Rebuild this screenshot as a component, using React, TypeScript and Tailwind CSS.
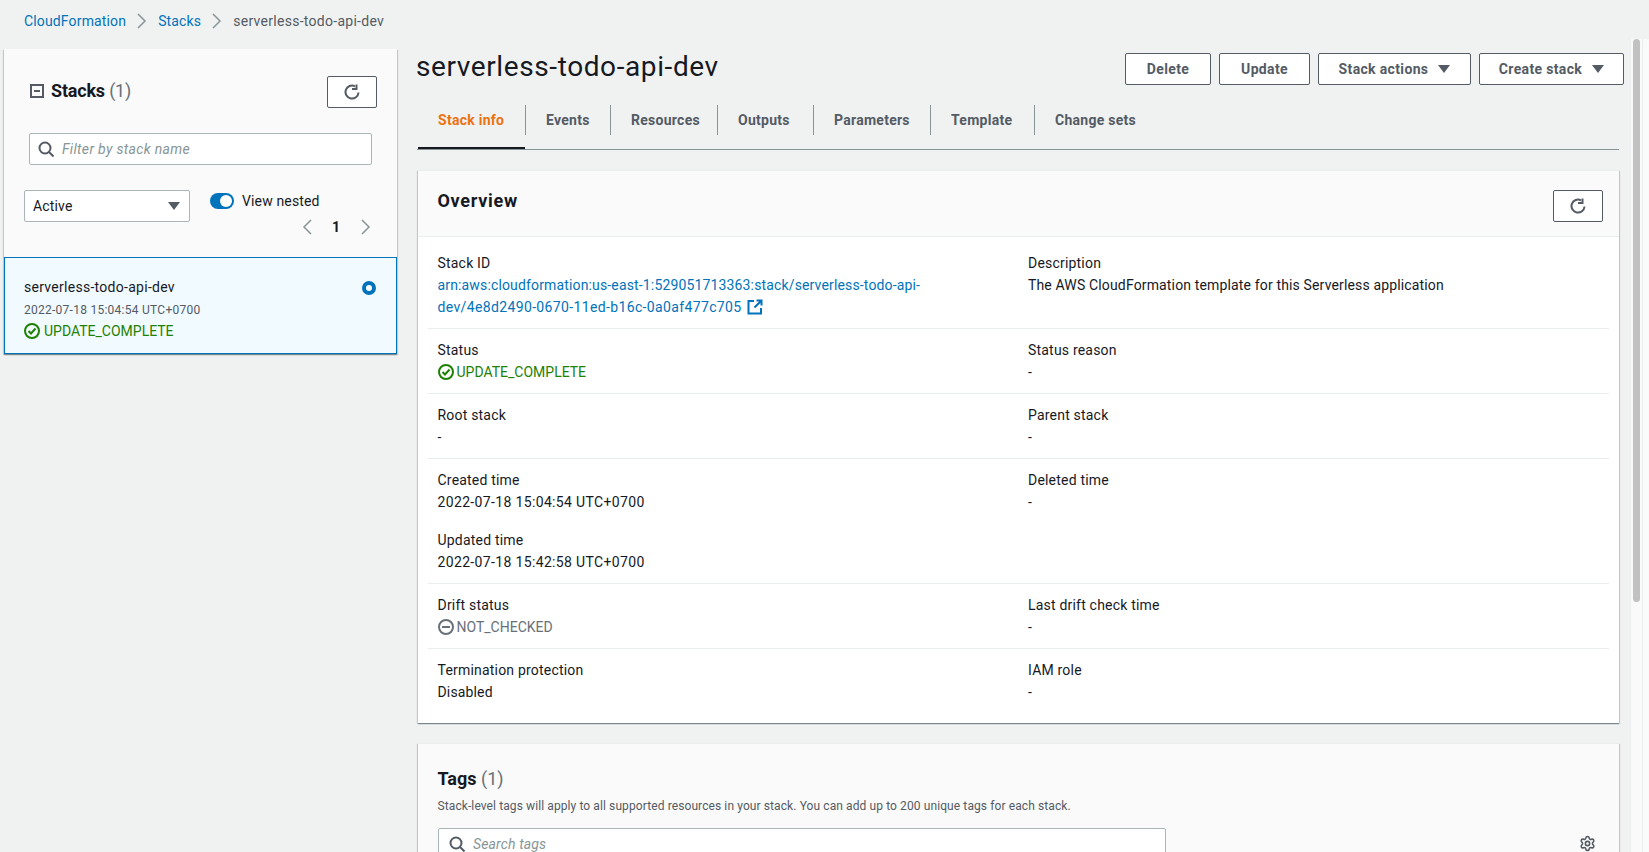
import type { ReactNode } from 'react';
import { Settings } from 'lucide-react';

function Refresh() {
  return (
    <svg viewBox="0 0 16 16" className="h-[16px] w-[16px]" fill="none" stroke="#545b64" strokeWidth="2">
      <path d="M14.500 8.500A6.500 6.500 0 1 1 11 2.300" />
      <path d="M12.500 0.500V5H8" />
    </svg>
  );
}

function RefreshButton() {
  return (
    <button className="flex h-[32px] w-[50px] items-center justify-center rounded-[2px] border border-[#545b64] bg-white">
      <Refresh />
    </button>
  );
}

function Search() {
  return (
    <svg viewBox="0 0 16 16" className="h-[16px] w-[16px] shrink-0" fill="none" stroke="#545b64" strokeWidth="2">
      <circle cx="7" cy="7" r="5.500" />
      <path d="M11 11l4.500 4.500" />
    </svg>
  );
}

function Caret() {
  return (
    <svg viewBox="0 0 12 8" className="h-[8px] w-[12px] shrink-0" fill="#545b64">
      <path d="M0 0h12L6 8z" />
    </svg>
  );
}

function CheckCircle() {
  return (
    <svg viewBox="0 0 16 16" className="h-[16px] w-[16px] shrink-0" fill="none" stroke="#1d8102" strokeWidth="2">
      <circle cx="8" cy="8" r="7" />
      <path d="M4.500 8l2.500 2.500 4.500-5" />
    </svg>
  );
}

function MinusCircle() {
  return (
    <svg viewBox="0 0 16 16" className="h-[16px] w-[16px] shrink-0" fill="none" stroke="#687078" strokeWidth="2">
      <circle cx="8" cy="8" r="7" />
      <path d="M4 8h8" />
    </svg>
  );
}

function Chevron({ left = false }: { left?: boolean }) {
  return (
    <svg viewBox="0 0 10 16" className="h-[16px] w-[10px] shrink-0" fill="none" stroke="#879596" strokeWidth="1.500">
      <path d={left ? 'M9 1L2 8l7 7' : 'M1 1l7 7-7 7'} />
    </svg>
  );
}

function Field({ label, children }: { label: string; children: ReactNode }) {
  return (
    <div>
      <div className="h-[22px] leading-[22px] tracking-[0.2px] text-[#16191f]">{label}</div>
      <div className="leading-[22px] text-[#16191f]">{children}</div>
    </div>
  );
}

function Row({ first, last, children }: { first?: boolean; last?: boolean; children: ReactNode }) {
  return (
    <div
      className={`mx-[10px] grid grid-cols-[590.5px_1fr] pl-[9.5px] pr-[10px] ${first ? 'pt-[15px]' : 'pt-[10px]'} ${
        last ? 'pb-[20px]' : 'border-b border-[#eaeded] pb-[10px]'
      }`}
    >
      {children}
    </div>
  );
}

const tabs = [
  { label: 'Events', width: 'w-[85px]' },
  { label: 'Resources', width: 'w-[107px]' },
  { label: 'Outputs', width: 'w-[96px]' },
  { label: 'Parameters', width: 'w-[117px]' },
  { label: 'Template', width: 'w-[104px]' },
  { label: 'Change sets', width: 'w-[125px]' },
];
const cardShadow = 'shadow-[0_1px_1px_0_rgba(0,28,36,0.3),1px_1px_1px_0_rgba(0,28,36,0.15),-1px_1px_1px_0_rgba(0,28,36,0.15)]';

export default function App() {
  return (
    <div className="flex h-[852px] overflow-hidden bg-[#f0f2f2] text-[14px] tracking-[0.15px] text-[#16191f] [font-family:Roboto,sans-serif]">
      <div className="min-w-0 flex-1">
        <nav className="flex h-[42px] items-center pl-[24px]">
          <a className="text-[#0073bb]">CloudFormation</a>
          <span className="mx-[11px]"><Chevron /></span>
          <a className="text-[#0073bb]">Stacks</a>
          <span className="mx-[11px]"><Chevron /></span>
          <span className="tracking-[0.28px] text-[#545b64]">serverless-todo-api-dev</span>
        </nav>

        <div className="flex pl-[4px]">
          <aside className="mt-[7px] w-[393px] shrink-0">
            <div className={`bg-[#fafafa] ${cardShadow}`}>
              <div className="flex items-start justify-between pl-[26px] pr-[20px] pt-[27px]">
                <div className="mt-[3px] flex items-center gap-[7px]">
                  <svg viewBox="0 0 14 14" className="h-[14px] w-[14px]" fill="none" stroke="#545b64" strokeWidth="2">
                    <path d="M1 1h12v12H1zM4 7h6" />
                  </svg>
                  <h2 className="text-[18px] leading-[24px] tracking-[-0.2px]">
                    <span className="font-bold">Stacks</span> <span className="text-[#687078]">(1)</span>
                  </h2>
                </div>
                <RefreshButton />
              </div>
              <div className="mx-[25px] mt-[25px] flex h-[32px] items-center gap-[8px] rounded-[2px] border border-[#aab7b8] bg-white pl-[8px]">
                <Search />
                <span className="mt-[1px] italic tracking-[0.33px] text-[#879596]">Filter by stack name</span>
              </div>
              <div className="mt-[25px] flex pb-[22px] pl-[20px]">
                <div className="flex h-[32px] w-[166px] items-center justify-between rounded-[2px] border border-[#aab7b8] bg-white pl-[8px] pr-[9px]">
                  <span>Active</span>
                  <Caret />
                </div>
                <div className="ml-[20px] mt-[3px] w-[157px]">
                  <div className="flex h-[16px] items-center gap-[8px]">
                    <span className="flex h-[16px] w-[24px] items-center justify-end rounded-full bg-[#0073bb] pr-[2px]">
                      <span className="h-[12px] w-[12px] rounded-full bg-white" />
                    </span>
                    <span>View nested</span>
                  </div>
                  <div className="mt-[10px] flex h-[16px] items-center pl-[92px]">
                    <Chevron left />
                    <span className="ml-[20px] w-[8px] text-center font-bold">1</span>
                    <span className="ml-[21px]"><Chevron /></span>
                  </div>
                </div>
              </div>
            </div>
            <div className={`flex justify-between border border-[#0073bb] bg-[#f1faff] pb-[12px] pl-[19px] pr-[20px] pt-[19px] ${cardShadow}`}>
              <div>
                <div className="leading-[20px] tracking-[0.28px]">serverless-todo-api-dev</div>
                <div className="mt-[5px] text-[12px] leading-[16px] tracking-[0.26px] text-[#545b64]">2022-07-18 15:04:54 UTC+0700</div>
                <div className="mt-[3px] flex h-[20px] items-center gap-[4px] tracking-normal text-[#1d8102]">
                  <CheckCircle />
                  UPDATE_COMPLETE
                </div>
              </div>
              <span className="mt-[4px] h-[14px] w-[14px] rounded-full border-[4px] border-[#0073bb] bg-white" />
            </div>
          </aside>

          <main className="ml-[20px] w-[1207px] shrink-0">
            <div className="mt-[11px] flex h-[32px] items-start justify-between">
              <h1 className="-mt-[4px] -ml-[1px] text-[28px] leading-[36px] tracking-[0.6px] text-[#16191f]">serverless-todo-api-dev</h1>
              <div className="flex gap-[8px] font-bold tracking-[0.35px] text-[#545b64]">
                <button className="h-[32px] w-[86px] rounded-[2px] border border-[#545b64] bg-white">Delete</button>
                <button className="h-[32px] w-[91px] rounded-[2px] border border-[#545b64] bg-white">Update</button>
                <button className="flex h-[32px] w-[153px] items-center justify-center gap-[10px] rounded-[2px] border border-[#545b64] bg-white">
                  Stack actions <Caret />
                </button>
                <button className="flex h-[32px] w-[145px] items-center justify-center gap-[10px] rounded-[2px] border border-[#545b64] bg-white">
                  Create stack <Caret />
                </button>
              </div>
            </div>

            <div className="mt-[20px] flex h-[45px] w-[1202px] items-start border-b border-[#879596] pl-[1px] font-bold tracking-[0.27px] text-[#545b64]">
              <div className="h-[44px] w-[107px] border-b-2 border-[#16191f]">
                <div className="flex h-[30px] items-center pl-[20px] text-[#ec7211]">Stack info</div>
              </div>
              {tabs.map((tab) => (
                <div
                  key={tab.label}
                  className={`flex h-[30px] items-center border-l border-[#879596] pl-[20px] ${tab.width}`}
                >
                  {tab.label}
                </div>
              ))}
            </div>

            <section className={`ml-[1px] mt-[20px] w-[1201px] border-t border-[#eaeded] bg-white ${cardShadow}`}>
              <div className="flex h-[66px] items-start justify-between border-b border-[#eaeded] bg-[#fafafa] pl-[19.500px] pr-[16px] pt-[19px]">
                <h2 className="-mt-[1px] text-[18px] font-bold leading-[24px] tracking-[0.7px]">Overview</h2>
                <RefreshButton />
              </div>
              <Row first>
                <Field label="Stack ID">
                  <span className="whitespace-nowrap text-[#0073bb]">
                    arn:aws:cloudformation:us-east-1:529051713363:stack/serverless-todo-api-
                    <br />
                    <span className="tracking-[0.36px]">dev/4e8d2490-0670-11ed-b16c-0a0af477c705</span>
                    <svg viewBox="0 0 16 16" className="ml-[5px] inline h-[16px] w-[16px] align-[-3px]" fill="none" stroke="#0073bb" strokeWidth="2">
                      <path d="M7 2H1.500v12.500H14V9M9.500 1.500H14.500V6.500M14 2L7.500 8.500" />
                    </svg>
                  </span>
                </Field>
                <Field label="Description">The AWS CloudFormation template for this Serverless application</Field>
              </Row>
              <Row>
                <Field label="Status">
                  <span className="flex items-center gap-[3px] tracking-normal text-[#1d8102]">
                    <CheckCircle />
                    UPDATE_COMPLETE
                  </span>
                </Field>
                <Field label="Status reason">-</Field>
              </Row>
              <Row>
                <Field label="Root stack">-</Field>
                <Field label="Parent stack">-</Field>
              </Row>
              <Row>
                <div>
                  <Field label="Created time"><span className="tracking-[0.35px]">2022-07-18 15:04:54 UTC+0700</span></Field>
                  <div className="mt-[16px]">
                    <Field label="Updated time"><span className="tracking-[0.35px]">2022-07-18 15:42:58 UTC+0700</span></Field>
                  </div>
                </div>
                <Field label="Deleted time">-</Field>
              </Row>
              <Row>
                <Field label="Drift status">
                  <span className="flex items-center gap-[3px] tracking-normal text-[#687078]">
                    <MinusCircle />
                    NOT_CHECKED
                  </span>
                </Field>
                <Field label="Last drift check time">-</Field>
              </Row>
              <Row last>
                <Field label="Termination protection">Disabled</Field>
                <Field label="IAM role">-</Field>
              </Row>
            </section>

            <section className={`ml-[1px] mt-[20px] h-[200px] w-[1201px] border-t border-[#eaeded] bg-[#fafafa] pl-[19.500px] pr-[23px] pt-[23px] ${cardShadow}`}>
              <h2 className="text-[18px] leading-[24px] tracking-normal">
                <span className="font-bold">Tags</span> <span className="text-[#687078]">(1)</span>
              </h2>
              <p className="mt-[7px] text-[12px] leading-[16px] tracking-[0.1px] text-[#545b64]">
                Stack-level tags will apply to all supported resources in your stack. You can add up to 200 unique tags for each stack.
              </p>
              <div className="mt-[14px] flex items-start justify-between">
                <div className="ml-[0.500px] flex h-[32px] w-[728px] items-center gap-[8px] rounded-[2px] border border-[#aab7b8] bg-white pl-[10px]">
                  <Search />
                  <span className="italic text-[#879596]">Search tags</span>
                </div>
                <span className="mt-[7px]"><Settings className="h-[17px] w-[17px] text-[#545b64]" strokeWidth={2.2} /></span>
              </div>
            </section>
          </main>
        </div>
      </div>

      <div className="mt-[39px] flex w-[19px] shrink-0">
        <div className="w-[13px] border-x border-[#eaeded] bg-[#fafafa] px-[2px]">
          <div className="h-[563px] rounded-full bg-[#c1c1c1]" />
        </div>
        <div className="w-[6px] bg-[#fafafa]" />
      </div>
    </div>
  );
}
